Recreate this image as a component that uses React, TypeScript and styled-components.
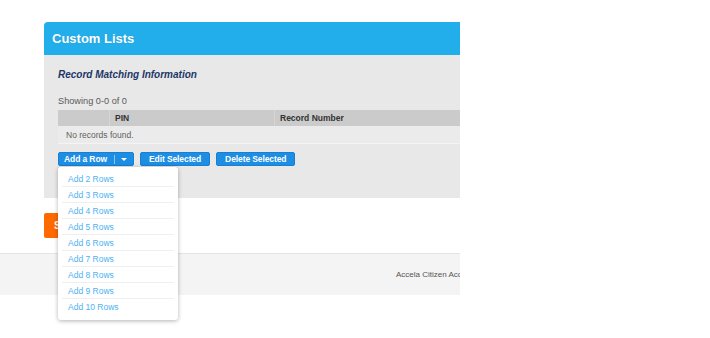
import React from "react";
import styled, { createGlobalStyle } from "styled-components";

const Global = createGlobalStyle`
  html, body { margin: 0; padding: 0; background: #fff; }
  body { font-family: "Liberation Sans", Arial, sans-serif; }
`;

const Page = styled.div`
  width: 460px;
  min-height: 338px;
  box-sizing: border-box;
  padding-top: 22px;
`;

const Panel = styled.section`
  margin-left: 44px;
  border-radius: 4px 0 0 0;
  position: relative;
  z-index: 2;
`;

const PanelHeader = styled.header`
  height: 33px;
  background: #21aeea;
  border-radius: 4px 0 0 0;
  display: flex;
  align-items: center;
  padding-left: 8px;
  color: #fff;
  font-weight: bold;
  font-size: 13px;
  text-shadow: 0 0 1px rgba(0, 0, 0, 0.15);
`;

const PanelBody = styled.div`
  background: #e8e8e8;
  height: 143px;
  box-sizing: border-box;
  padding: 14px 0 0 14px;
`;

const SectionTitle = styled.h3`
  margin: 0;
  font-size: 10px;
  line-height: 12px;
  font-weight: bold;
  font-style: italic;
  color: #1c3766;
`;

const Count = styled.div`
  margin-top: 14px;
  font-size: 9.2px;
  line-height: 12px;
  color: #5a5a5a;
`;

const Table = styled.div`
  margin-top: 3px;
  display: grid;
  grid-template-columns: 51px 165px 1fr;
`;

const HeadCell = styled.div<{ $first?: boolean }>`
  height: 16px;
  background: #cbcbcb;
  border-left: ${(p) => (p.$first ? "none" : "1px solid #d6d6d6")};
  display: flex;
  align-items: center;
  padding-left: 5px;
  font-size: 8.5px;
  font-weight: bold;
  color: #333;
`;

const EmptyRow = styled.div`
  grid-column: 1 / -1;
  height: 17px;
  background: #ebebeb;
  border-bottom: 1px solid #f4f4f4;
  display: flex;
  align-items: center;
  padding-left: 8px;
  font-size: 8.5px;
  color: #5f5f5f;
`;

const Actions = styled.div`
  margin-top: 8px;
  display: flex;
  gap: 6px;
  position: relative;
`;

const Button = styled.button`
  height: 14px;
  padding: 0 8px;
  border: 1px solid #1a7fcf;
  border-radius: 2px;
  background: #1d8ee3;
  color: #fff;
  font-family: "Liberation Sans", Arial, sans-serif;
  font-weight: bold;
  font-size: 8.5px;
  display: flex;
  align-items: center;
  box-sizing: border-box;
  letter-spacing: -0.1px;
`;

const SplitButton = styled(Button)`
  width: 76px;
  padding: 0 0 0 5px;
`;

const SplitDivider = styled.span`
  width: 1px;
  height: 9px;
  background: #8cc6f0;
  margin-left: 7px;
`;

const Caret = styled.span`
  flex: 1;
  display: flex;
  justify-content: center;
  &::after {
    content: "";
    border-left: 3px solid transparent;
    border-right: 3px solid transparent;
    border-top: 3px solid #fff;
  }
`;

const Menu = styled.ul`
  position: absolute;
  left: 0;
  top: 15px;
  width: 120px;
  margin: 0;
  padding: 4px 4px 5px 4px;
  list-style: none;
  background: #fff;
  border-radius: 3px;
  box-shadow: 0 1px 4px rgba(0, 0, 0, 0.3);
  box-sizing: border-box;
  z-index: 5;
`;

const MenuItem = styled.li<{ $last?: boolean }>`
  height: 16px;
  display: flex;
  align-items: center;
  padding-left: 6px;
  font-size: 8.5px;
  color: #4fb1f1;
  border-bottom: ${(p) => (p.$last ? "none" : "1px solid #efefef")};
  box-sizing: border-box;
`;

const SubmitRow = styled.div`
  margin: 15px 0 0 44px;
`;

const SubmitButton = styled.button`
  height: 25px;
  padding: 0 10px;
  border: none;
  border-radius: 2px 0 0 2px;
  background: #ff6a00;
  color: #fff;
  font-family: "Liberation Sans", Arial, sans-serif;
  font-weight: bold;
  font-size: 10px;
`;

const Footer = styled.footer`
  margin-top: 15px;
  height: 42px;
  background: #f4f4f4;
  border-top: 1px solid #e4e4e4;
  box-sizing: border-box;
  display: flex;
  align-items: center;
  padding-left: 396px;
  white-space: nowrap;
  overflow: hidden;
  font-size: 8px;
  color: #555;
`;

const rows = [2, 3, 4, 5, 6, 7, 8, 9, 10];

export default function App() {
  return (
    <>
      <Global />
      <Page>
        <Panel>
          <PanelHeader>Custom Lists</PanelHeader>
          <PanelBody>
            <SectionTitle>Record Matching Information</SectionTitle>
            <Count>Showing 0-0 of 0</Count>
            <Table>
              <HeadCell $first />
              <HeadCell>PIN</HeadCell>
              <HeadCell>Record Number</HeadCell>
              <EmptyRow>No records found.</EmptyRow>
            </Table>
            <Actions>
              <SplitButton>
                Add a Row
                <SplitDivider />
                <Caret />
              </SplitButton>
              <Button>Edit Selected</Button>
              <Button>Delete Selected</Button>
              <Menu>
                {rows.map((n, i) => (
                  <MenuItem key={n} $last={i === rows.length - 1}>
                    Add {n} Rows
                  </MenuItem>
                ))}
              </Menu>
            </Actions>
          </PanelBody>
        </Panel>
        <SubmitRow>
          <SubmitButton>Submit</SubmitButton>
        </SubmitRow>
        <Footer>Accela Citizen Access</Footer>
      </Page>
    </>
  );
}
